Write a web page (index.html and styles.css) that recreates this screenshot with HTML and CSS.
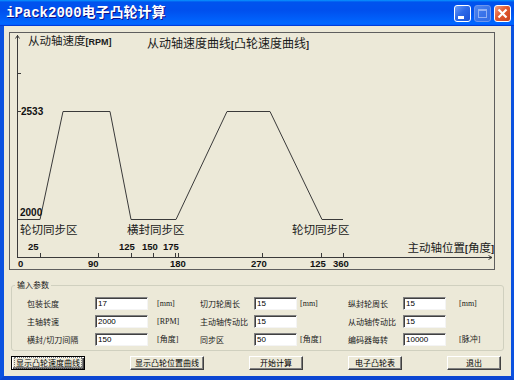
FILE: index.html
```html
<!DOCTYPE html>
<html lang="zh-CN">

<head>
    <meta charset="UTF-8">
    <title>iPack2000电子凸轮计算</title>
    <link rel="stylesheet" href="styles.css">
</head>

<body>
    <div class="window">
        <div class="titlebar">
            <span class="title">iPack2000电子凸轮计算</span>
            <div class="caption-buttons">
                <div class="cap-btn cap-min">
                    <svg width="17" height="17" viewBox="0 0 17 17"><rect x="4" y="11" width="6" height="3" fill="#fff"/></svg>
                </div>
                <div class="cap-btn cap-max">
                    <svg width="17" height="17" viewBox="0 0 17 17"><rect x="4.5" y="4.5" width="8" height="8" fill="none" stroke="#8fb0f4" stroke-width="1"/><line x1="4" y1="5" x2="13" y2="5" stroke="#8fb0f4" stroke-width="2"/></svg>
                </div>
                <div class="cap-btn cap-close">
                    <svg width="17" height="17" viewBox="0 0 17 17"><path d="M4.5 4.5 L12.5 12.5 M12.5 4.5 L4.5 12.5" stroke="#fff" stroke-width="2.2"/></svg>
                </div>
            </div>
        </div>

        <div class="client">
            <!-- speed curve -->
            <div class="chart">
                <svg width="484" height="236" viewBox="10 33 484 236">
                    <g class="axis">
                        <line x1="17.5" y1="35" x2="17.5" y2="258"/>
                        <polyline points="15.5,38.5 17.5,35.5 19.5,38.5"/>
                        <line x1="17" y1="73.5" x2="21" y2="73.5"/>
                        <line x1="17" y1="111.5" x2="21" y2="111.5"/>
                        <line x1="17" y1="257.5" x2="492" y2="257.5"/>
                        <polyline points="488.5,255.5 492,257.5 488.5,259.5"/>
                        <line x1="40.5" y1="253" x2="40.5" y2="257"/>
                        <line x1="98.5" y1="253" x2="98.5" y2="257"/>
                        <line x1="131.5" y1="253" x2="131.5" y2="257"/>
                        <line x1="153.5" y1="253" x2="153.5" y2="257"/>
                        <line x1="175.5" y1="253" x2="175.5" y2="257"/>
                        <line x1="178.5" y1="253" x2="178.5" y2="257"/>
                        <line x1="262.5" y1="253" x2="262.5" y2="257"/>
                        <line x1="321.5" y1="253" x2="321.5" y2="257"/>
                        <line x1="343.5" y1="253" x2="343.5" y2="257"/>
                    </g>
                    <polyline class="curve" points="17,219.5 40,219.5 63,111.5 110,111.5 131,219.5 176,219.5 227,111.5 270,111.5 322,219.5 343,219.5"/>

                    <text class="label" x="28" y="44.5">从动轴速度<tspan class="unit-b">[RPM]</tspan></text>
                    <text class="label title-text" x="147" y="48">从动轴速度曲线<tspan class="unit-b">[</tspan>凸轮速度曲线<tspan class="unit-b">]</tspan></text>

                    <text class="num big" x="21" y="115">2533</text>
                    <text class="num big" x="20" y="216">2000</text>

                    <text class="label" x="20" y="234">轮切同步区</text>
                    <text class="label" x="127" y="234">横封同步区</text>
                    <text class="label" x="292" y="234">轮切同步区</text>

                    <text class="num" x="28" y="250">25</text>
                    <text class="num" x="119" y="250">125</text>
                    <text class="num" x="142" y="250">150</text>
                    <text class="num" x="163" y="250">175</text>

                    <text class="num" x="18" y="267">0</text>
                    <text class="num" x="88" y="267">90</text>
                    <text class="num" x="170" y="267">180</text>
                    <text class="num" x="251" y="267">270</text>
                    <text class="num" x="310" y="267">125</text>
                    <text class="num" x="333" y="267">360</text>

                    <text class="label" x="494" y="252" text-anchor="end">主动轴位置<tspan class="unit-b">[</tspan>角度<tspan class="unit-b">]</tspan></text>
                </svg>
            </div>

            <fieldset class="params">
                <legend>输入参数</legend>
                <div class="param-grid">
                    <span class="lbl">包装长度</span>
                    <input class="field" value="17">
                    <span class="unit unit-1">[mm]</span>
                    <span class="lbl">切刀轮周长</span>
                    <input class="field" value="15">
                    <span class="unit unit-2">[mm]</span>
                    <span class="lbl">纵封轮周长</span>
                    <input class="field" value="15">
                    <span class="unit unit-3">[mm]</span>

                    <span class="lbl">主轴转速</span>
                    <input class="field" value="2000">
                    <span class="unit unit-1">[RPM]</span>
                    <span class="lbl">主动轴传动比</span>
                    <input class="field" value="15">
                    <span class="unit unit-2"></span>
                    <span class="lbl">从动轴传动比</span>
                    <input class="field" value="15">
                    <span class="unit unit-3"></span>

                    <span class="lbl">横封/切刀间隔</span>
                    <input class="field" value="150">
                    <span class="unit unit-1">[角度]</span>
                    <span class="lbl">同步区</span>
                    <input class="field" value="50">
                    <span class="unit unit-2">[角度]</span>
                    <span class="lbl">编码器每转</span>
                    <input class="field" value="10000">
                    <span class="unit unit-3">[脉冲]</span>
                </div>
            </fieldset>

            <div class="buttons">
                <button class="btn btn-wide btn-default"><span class="focus">显示凸轮速度曲线</span></button>
                <button class="btn btn-wide">显示凸轮位置曲线</button>
                <button class="btn">开始计算</button>
                <button class="btn">电子凸轮表</button>
                <button class="btn">退出</button>
            </div>
        </div>
    </div>
</body>

</html>
```

FILE: styles.css
```css
body {
    margin: 0;
    font-family: "Noto Sans CJK SC", sans-serif;
    background: #fff;
}

.window {
    width: 514px;
    height: 380px;
    display: flex;
    flex-direction: column;
}

.titlebar {
    height: 26px;
    flex: none;
    display: flex;
    align-items: center;
    justify-content: space-between;
    padding: 0 3px 0 6px;
    background: linear-gradient(#0997ff 0, #0053ee 8%, #0050ee 40%, #0066ff 88%, #0066ff 93%, #005bff 95%, #003dd7 96%, #003dd7 100%);
}

.title {
    color: #fff;
    font-family: "Liberation Mono", "Noto Sans CJK SC", monospace;
    font-weight: bold;
    font-size: 14px;
    line-height: 16px;
    text-shadow: 1px 1px #0f1089;
}

.caption-buttons {
    display: flex;
    gap: 3px;
}

.cap-btn {
    width: 17px;
    height: 17px;
    box-sizing: border-box;
    border: 1px solid #fff;
    border-radius: 3px;
    display: flex;
}

.cap-btn svg {
    margin: -1px;
}

.cap-min {
    background: linear-gradient(135deg, #6d9ef8 0, #2d6ae8 45%, #1a52d6 100%);
}

.cap-max {
    border-color: #6d95ec;
    background: linear-gradient(135deg, #4f86ef 0, #3a74ea 50%, #336ce4 100%);
}

.cap-close {
    background: linear-gradient(135deg, #f3a184 0, #e2592f 45%, #c9431f 100%);
}

.client {
    flex: 1;
    background: #ece9d8;
    border-left: 4px solid #0b52e0;
    border-right: 3px solid #0b52e0;
    border-bottom: 4px solid #0b46d2;
}

/* chart */
.chart {
    width: 486px;
    height: 238px;
    box-sizing: border-box;
    margin: 6px 0 0 5px;
    border: 1px solid #5e5e5e;
}

.chart svg {
    display: block;
}

.axis line,
.axis polyline {
    stroke: #3a3a3a;
    stroke-width: 1;
    fill: none;
}

.curve {
    fill: none;
    stroke: #3a3a3a;
    stroke-width: 1;
}

.label {
    font-family: "Noto Sans CJK SC", sans-serif;
    font-size: 11.5px;
    fill: #1a1a1a;
}

.title-text {
    font-size: 12px;
}

.unit-b {
    font-family: "Liberation Sans", sans-serif;
    font-weight: bold;
    font-size: 9px;
}

.num {
    font-family: "Liberation Sans", sans-serif;
    font-weight: bold;
    font-size: 9.5px;
    fill: #111;
}

.num.big {
    font-size: 10px;
}

/* input parameters */
.params {
    width: 493px;
    box-sizing: border-box;
    margin: 10px 0 0 7px;
    padding: 0;
    border: 1px solid #d0d0bf;
    border-radius: 3px;
}

.params legend {
    font-size: 8px;
    line-height: 10px;
    padding: 0 2px;
    margin-left: 3px;
    color: #1a1a1a;
}

.param-grid {
    display: grid;
    grid-template-columns: 68px 53px 52px 54px 43px 51px 55px 43px auto;
    grid-auto-rows: 13px;
    row-gap: 5px;
    align-items: center;
    padding: 7px 0 4px 15px;
    font-size: 8px;
    line-height: 13px;
    color: #1a1a1a;
}

.lbl {
    white-space: nowrap;
}

.field {
    width: 100%;
    height: 13px;
    box-sizing: border-box;
    margin: 0;
    padding: 0 2px;
    font: 8px "Liberation Sans", sans-serif;
    color: #000;
    background: #fff;
    border: 1px solid;
    border-color: #808080 #f4f4f4 #f4f4f4 #808080;
    box-shadow: inset 1px 1px #404040;
    outline: none;
}

.unit {
    font-family: "Liberation Serif", "Noto Sans CJK SC", serif;
    white-space: nowrap;
}

.unit-1 {
    padding-left: 9px;
}

.unit-2 {
    padding-left: 3px;
}

.unit-3 {
    padding-left: 13px;
}

/* buttons */
.buttons {
    display: flex;
    justify-content: space-between;
    width: 490px;
    margin: 5px 0 0 7px;
}

.btn {
    width: 54px;
    height: 14px;
    box-sizing: border-box;
    padding: 0;
    font: 8px/12px "Noto Sans CJK SC", sans-serif;
    color: #000;
    background: #ece9d8;
    border: 1px solid;
    border-color: #fff #404040 #404040 #fff;
    box-shadow: inset -1px -1px #808080;
}

.btn-wide {
    width: 74px;
}

.btn-default {
    border: 1px solid #000;
    box-shadow: inset 1px 1px #fff, inset -1px -1px #404040, inset -2px -2px #808080;
}

.focus {
    display: inline-block;
    outline: 1px dotted #777;
    outline-offset: 0;
    line-height: 10px;
    padding: 0 1px;
}
```
